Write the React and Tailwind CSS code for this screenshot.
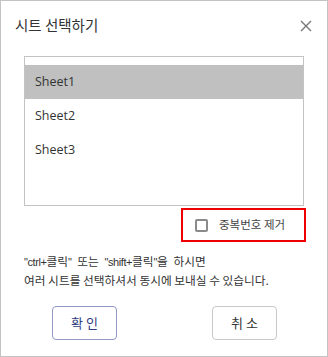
export default function App() {
  const lat = "font-['Liberation_Sans',sans-serif] text-[11px] tracking-[-0.4px]";
  return (
    <div className="w-[328px] h-[357px] bg-white border border-[#c3c3c3] relative">
      <div className="font-['Noto_Sans','Noto_Sans_CJK_KR',sans-serif] text-[#333]">
        <div className="flex items-center justify-between h-[34px] mt-[7px] pl-[14px] pr-[15px]">
          <span className="text-[14.5px] leading-none text-[#333] font-['Noto_Sans_CJK_KR',sans-serif]">시트 선택하기</span>
          <svg width="12" height="12" viewBox="0 0 12 12" className="mt-[2px]">
            <path d="M1 1 L11 11 M11 1 L1 11" stroke="#777" strokeWidth="1.4" fill="none" />
          </svg>
        </div>
        <div className="ml-[23px] mt-[14px] w-[280px] h-[150px] border border-[#c3c3c3] pt-[8px]">
          <div className="h-[34px] bg-[#c0c0c0] flex items-center pl-[10px] text-[12.5px] text-[#333] font-['Open_Sans',sans-serif]">Sheet1</div>
          <div className="h-[34px] flex items-center pl-[10px] text-[12.5px] text-[#333] font-['Open_Sans',sans-serif]">Sheet2</div>
          <div className="h-[34px] flex items-center pl-[10px] text-[12.5px] text-[#333] font-['Open_Sans',sans-serif]">Sheet3</div>
        </div>
        <div className="flex justify-end pr-[21px] mt-[2px]">
          <div className="w-[125px] h-[34px] border-2 border-[#ee0000] flex items-center pl-[12px]">
            <span className="w-[13px] h-[13px] border-2 border-[#8a8a8a] rounded-[2px]"></span>
            <span className="ml-[11px] text-[11.5px] text-[#444] font-['Noto_Sans_CJK_KR',sans-serif]">중복번호 제거</span>
          </div>
        </div>
        <div className="ml-[23px] mt-[10px] text-[11.7px] leading-[18px] text-[#333] font-['Noto_Sans_CJK_KR',sans-serif]">
          <div className="[word-spacing:3px]">
            <span className={lat}>"ctrl+</span>클릭<span className={lat}>"</span> 또는 <span className={lat}>"shift+</span>클릭<span className={lat}>"</span>을 하시면
          </div>
          <div>여러 시트를 선택하셔서 동시에 보내실 수 있습니다.</div>
        </div>
        <div className="flex mt-[17px] pl-[51px]">
          <button className="w-[65px] h-[34px] border border-[#8f98c4] rounded-[4px] text-[13px] text-[#2e3b80] bg-white font-['Noto_Sans_CJK_KR',sans-serif]">확 인</button>
          <button className="ml-[95px] w-[65px] h-[34px] border border-[#c8c8c8] rounded-[4px] text-[13px] text-[#333] bg-white font-['Noto_Sans_CJK_KR',sans-serif]">취 소</button>
        </div>
      </div>
    </div>
  );
}
